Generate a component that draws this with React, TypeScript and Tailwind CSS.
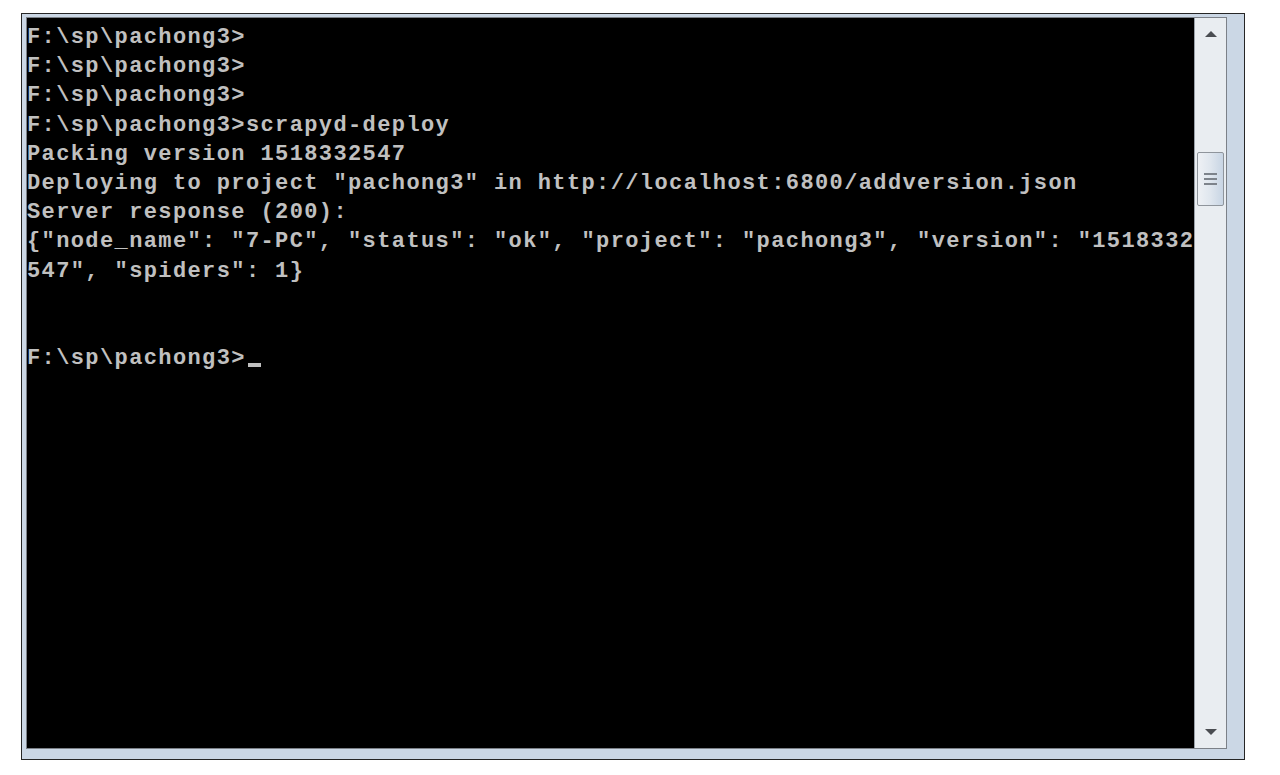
const lines = [
  "F:\\sp\\pachong3>",
  "F:\\sp\\pachong3>",
  "F:\\sp\\pachong3>",
  "F:\\sp\\pachong3>scrapyd-deploy",
  "Packing version 1518332547",
  'Deploying to project "pachong3" in http://localhost:6800/addversion.json',
  "Server response (200):",
  '{"node_name": "7-PC", "status": "ok", "project": "pachong3", "version": "1518332',
  '547", "spiders": 1}',
  "",
  "",
];

const Arrow = ({ down }: { down?: boolean }) => (
  <svg width="14" height="8" viewBox="0 0 14 8">
    <path
      d={down ? "M1 1 H13 L7 7 Z" : "M1 7 H13 L7 1 Z"}
      fill="#4a4d52"
    />
  </svg>
);

const ScrollBar = () => (
  <div className="flex w-[32px] flex-col border-l border-[#9aa1a9] bg-[#e9edf1]">
    <div className="flex h-[32px] items-center justify-center">
      <Arrow />
    </div>
    <div className="mx-[2px] mt-[102px] flex h-[54px] items-center justify-center rounded-[2px] border border-[#8f959c] bg-gradient-to-r from-[#eef1f5] via-[#dfe6ee] to-[#c8d5e4]">
      <div className="flex w-[13px] flex-col gap-[3px]">
        <div className="h-[2px] bg-[#7d838b]" />
        <div className="h-[2px] bg-[#7d838b]" />
        <div className="h-[2px] bg-[#7d838b]" />
      </div>
    </div>
    <div className="flex-1" />
    <div className="flex h-[32px] items-center justify-center">
      <Arrow down />
    </div>
  </div>
);

const App = () => {
  return (
    <div className="min-h-screen bg-white pl-[21px] pt-[13px]">
      <div className="flex h-[747px] w-[1224px] border border-[#262626] bg-[#cbd7e5] pb-[10px] pl-[4px] pr-[17px] pt-[3px]">
        <div className="flex flex-1 border border-[#7c8188]">
          <div className="w-[1167px] overflow-hidden bg-black pt-[5px] font-['Liberation_Mono',monospace] text-[22px] font-bold leading-[29.2px] tracking-[1.39px] text-[#c0c0c0]">
            {lines.map((line, i) => (
              <div key={i} className="h-[29.2px] whitespace-pre">
                {line}
              </div>
            ))}
            <div className="h-[29.2px] whitespace-pre">
              F:\sp\pachong3&gt;
              <span className="ml-[2px] inline-block h-[4px] w-[13px] bg-[#c0c0c0] align-[-3px]" />
            </div>
          </div>
          <ScrollBar />
        </div>
      </div>
    </div>
  );
};

export default App;
